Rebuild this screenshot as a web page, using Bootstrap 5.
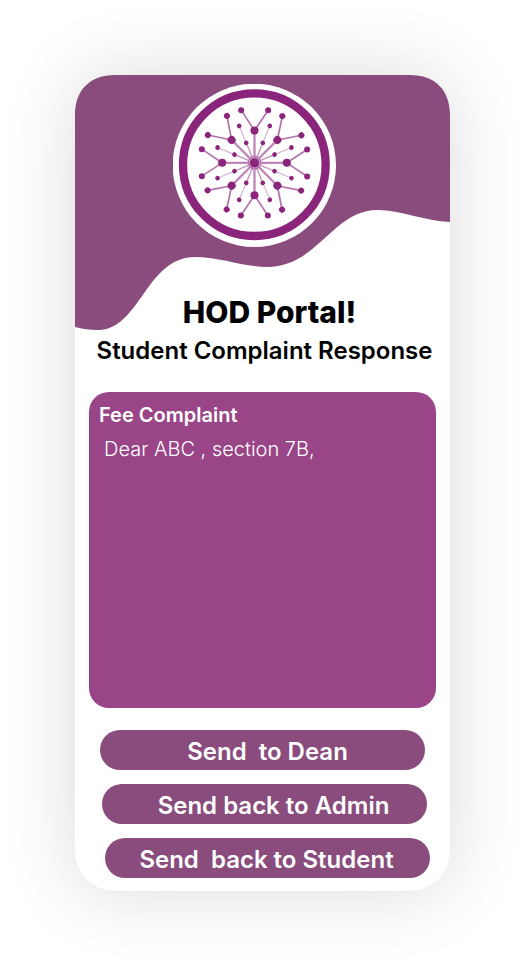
<!DOCTYPE html>
<html lang="en">
<head>
<meta charset="utf-8">
<meta name="viewport" content="width=device-width, initial-scale=1">
<title>HOD Portal</title>
<link href="https://cdn.jsdelivr.net/npm/bootstrap@5.3.0/dist/css/bootstrap.min.css" rel="stylesheet">
<style>
body { font-family: Inter, "Liberation Sans", sans-serif; background: #fff; color: #000; }
.page-pad { padding: 75px; }
.portal { border-radius: 40px; background: #fff; box-shadow: 0 0 75px rgba(0, 0, 0, .15); }
.hero { display: grid; }
.hero > * { grid-area: 1 / 1; }
.wave { width: 100%; height: 256px; fill: #894c7c; }
.logo { width: 163px; height: 163px; margin: 9px 16px 0 0; justify-self: center; }
.portal-body { margin-top: -37px; padding: 0 14px 13px; }
.title { font-size: 30px; line-height: 36px; font-weight: 800; padding-left: 14px; }
.subtitle { font-size: 24px; line-height: 30px; font-weight: 600; padding-left: 4px; margin-top: 6px; }
.complaint { background: #994587; border-radius: 20px; margin-top: 26px; height: 316px; padding: 11px 10px; }
.complaint label { font-size: 20px; line-height: 24px; font-weight: 600; }
.complaint textarea { font-size: 20px; line-height: 24px; font-weight: 300; padding: 0 5px; margin-top: 10px; resize: none; }
.actions { padding: 0 6px 0 11px; margin-top: 22px; gap: 14px; }
.btn-send { --bs-btn-color: #fff; --bs-btn-bg: #894c7c; --bs-btn-hover-color: #fff; --bs-btn-hover-bg: #783f6c; --bs-btn-active-color: #fff; --bs-btn-active-bg: #6b3660; width: calc(100% - 5px); height: 40px; font-size: 24px; line-height: 30px; font-weight: 600; padding: 3px 0 0; border: 0; white-space: pre; }
.to-dean { padding-left: 10px; }
.to-admin { padding-left: 18px; margin-left: 2px; }
.to-student { padding-right: 2px; margin-left: 5px; }
</style>
</head>
<body>
<div class="page-pad">
<main class="portal">
  <header class="hero">
    <svg class="wave" viewBox="0 0 375 256" preserveAspectRatio="none" aria-hidden="true">
      <path d="M0 40C0 15 15 0 40 0H335C360 0 375 15 375 40V147C350 146 325 135 303 135C257 135 243 192 192 192C168 192 146 182 120 182C71 182 65 255 23 255C15 255 7 254 0 252Z"/>
    </svg>
    <svg class="logo" viewBox="24 18 489 489" role="img" aria-label="Institution logo">
      <defs>
        <g id="main-branch">
          <path d="M0-20V-97" stroke-width="7" stroke-opacity=".55"/>
          <path d="M-40-158L0-97L41-158" fill="none" stroke-width="5" stroke-opacity=".65"/>
          <circle cy="-97" r="12" stroke="none"/>
          <circle cx="-40" cy="-158" r="9" stroke="none"/>
          <circle cx="41" cy="-158" r="9" stroke="none"/>
        </g>
        <g id="small-branch">
          <path d="M0-20V-66" stroke-width="4" stroke-opacity=".5"/>
          <path d="M0-66V-120" stroke-width="3" stroke-opacity=".4"/>
          <circle cy="-65" r="7" stroke="none"/>
          <circle cy="-120" r="7" stroke="none"/>
        </g>
      </defs>
      <circle cx="268" cy="262" r="245" fill="#fff"/>
      <circle cx="268" cy="260" r="214" fill="none" stroke="#8b257c" stroke-width="25"/>
      <g transform="translate(268.500 254.500)" fill="#8b257c" stroke="#8b257c">
        <use href="#main-branch"/>
        <use href="#main-branch" transform="rotate(45)"/>
        <use href="#main-branch" transform="rotate(90)"/>
        <use href="#main-branch" transform="rotate(135)"/>
        <use href="#main-branch" transform="rotate(180)"/>
        <use href="#main-branch" transform="rotate(225)"/>
        <use href="#main-branch" transform="rotate(270)"/>
        <use href="#main-branch" transform="rotate(315)"/>
        <use href="#small-branch" transform="rotate(22.500)"/>
        <use href="#small-branch" transform="rotate(67.500)"/>
        <use href="#small-branch" transform="rotate(112.500)"/>
        <use href="#small-branch" transform="rotate(157.500)"/>
        <use href="#small-branch" transform="rotate(202.500)"/>
        <use href="#small-branch" transform="rotate(247.500)"/>
        <use href="#small-branch" transform="rotate(292.500)"/>
        <use href="#small-branch" transform="rotate(337.500)"/>
        <circle r="19" fill="#d6abd0" stroke-width="4" stroke-opacity=".55"/>
        <circle r="14" stroke="none"/>
      </g>
    </svg>
  </header>
  <div class="portal-body position-relative">
    <h1 class="title text-center mb-0">HOD Portal!</h1>
    <h2 class="subtitle text-center mb-0">Student Complaint Response</h2>
    <section class="complaint d-flex flex-column text-white">
      <label for="response">Fee Complaint</label>
      <textarea id="response" class="flex-grow-1 w-100 border-0 bg-transparent text-white">Dear ABC , section 7B,</textarea>
    </section>
    <div class="actions d-flex flex-column">
      <button type="button" class="btn btn-send rounded-pill to-dean">Send  to Dean</button>
      <button type="button" class="btn btn-send rounded-pill to-admin">Send back to Admin</button>
      <button type="button" class="btn btn-send rounded-pill to-student">Send  back to Student</button>
    </div>
  </div>
</main>
</div>
<script src="https://cdn.jsdelivr.net/npm/bootstrap@5.3.0/dist/js/bootstrap.bundle.min.js"></script>
</body>
</html>
